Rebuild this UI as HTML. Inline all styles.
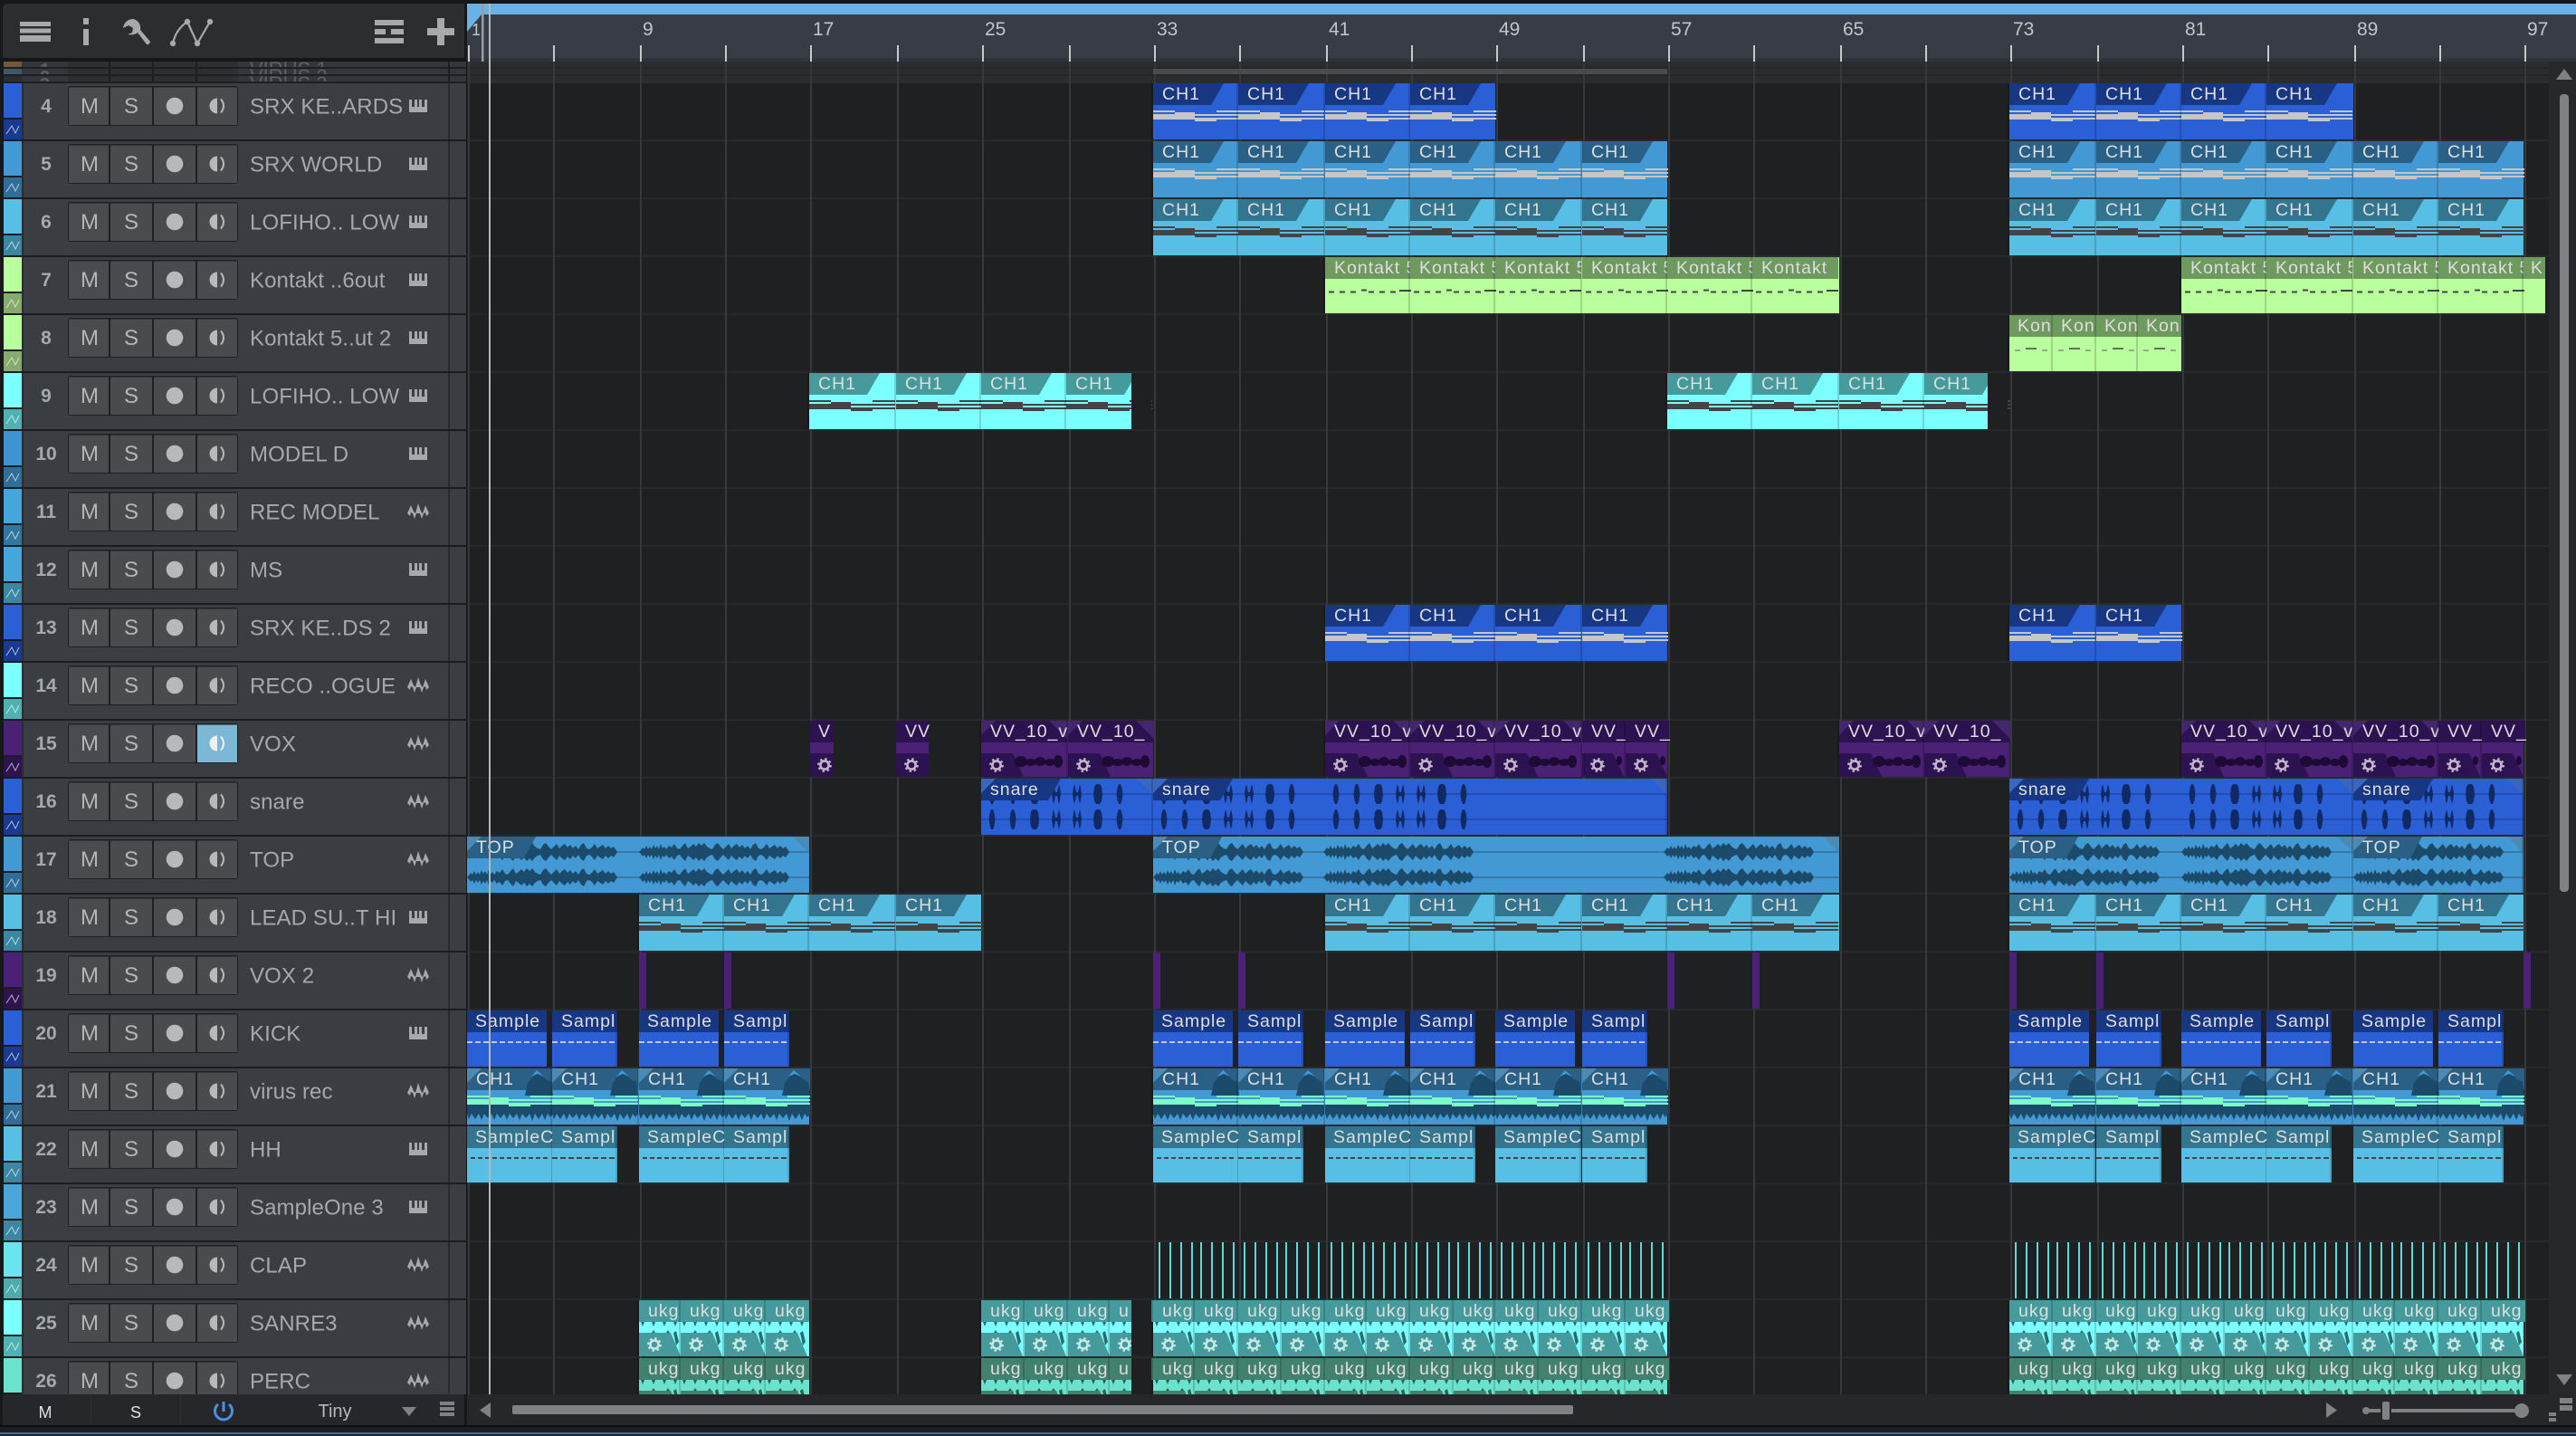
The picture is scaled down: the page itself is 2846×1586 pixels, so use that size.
<!DOCTYPE html>
<html><head><meta charset="utf-8"><style>
html,body{margin:0;padding:0;background:#1d1e20}
svg{display:block}
text{font-family:"Liberation Sans",sans-serif}
.l text{font-size:19.5px;fill:#dedede;letter-spacing:1px}
.nm{font-size:24px;fill:#a6a8aa;letter-spacing:.1px}
.no{font-size:21px;font-weight:700;fill:#a6a8aa;text-anchor:middle}
.bt{font-size:24px;fill:#b4b6b8;text-anchor:middle}
.rl text{font-size:21px;fill:#c4c4c4}
.B{fill:var(--b)}
.c4{--b:#2a5fd6;--h:#183783;--n:#c6c6c6;--l:#3b66bd;--w:#102a66}
.c5{--b:#4399d4;--h:#2a6085;--n:#c6c6c6;--l:#4a8ab5;--w:#1c4a6a}
.c6{--b:#57bfe4;--h:#33748f;--n:#444444}
.c7{--b:#baff9e;--h:#6e9a60;--n:#444444}
.c9{--b:#7cffff;--h:#459a9b;--n:#444444}
.c15{--b:#4a2175;--h:#2c1250;--g:#c2b6cc}
.c21{--b:#4399d4;--h:#2a6085;--n:#7dffc8}
.c25{--b:#7cffff;--h:#459a9b;--t:#2d6a6e;--g:#c8e8e8}
.c26{--b:#6be3cc;--h:#42806f;--t:#2d5e55;--g:#c8e8e8}
</style></head><body>
<svg xmlns="http://www.w3.org/2000/svg" width="2846" height="1586" viewBox="0 0 2846 1586">
<defs>
<pattern id="rp" patternUnits="userSpaceOnUse" x="0" y="92" width="10" height="64"><rect y="62" width="10" height="2" fill="#28292c"/></pattern>
<rect id="sp" x="-2" width="2" height="62" fill="#000" opacity=".16"/>
<path id="hd" d="M0,0H78L64,24H0z" style="fill:var(--h)"/>
<path id="nt" d="M0,30h24v2H0zM0,34h24v6H0zM24,32h22v8H24zM46,34h24v2H46zM46,38h24v4H46zM70,30h25v2H70zM70,34h25v2H70zM70,38h25v2H70z" style="fill:var(--n)"/>
<g id="c"><use href="#hd"/><use href="#nt"/><use href="#sp"/></g>
<g id="k"><rect width="95" height="24" style="fill:var(--h)"/><path d="M4,38.5H38M40,36.5H46M48,38.5H82" stroke="#444" stroke-width="2" stroke-dasharray="6 6" fill="none"/><path d="M82,37H95" stroke="#444" stroke-width="2" fill="none"/><use href="#sp"/></g>
<g id="k2"><rect width="48" height="24" style="fill:var(--h)"/><path d="M18,37H30" stroke="#444" stroke-width="1.500" fill="none"/><path d="M6,39H12M36,39H42" stroke="#666" stroke-width="1" fill="none"/><use href="#sp"/></g>
<g id="gr"><circle r="4.6" fill="none" stroke-width="2.6" style="stroke:var(--g)"/><circle r="6.8" fill="none" stroke-width="2.2" stroke-dasharray="2.4 2.94" style="stroke:var(--g)"/></g>
<g id="v"><rect width="95" height="24" style="fill:var(--h)"/><path d="M0,16L16,0H0zM75,0H95V20z" fill="#43266e"/><path d="M0,36H35L47,62H0z" style="fill:var(--h)"/><g fill="#1d0a35"><ellipse cx="44" cy="45" rx="7" ry="6"/><ellipse cx="55" cy="46" rx="6" ry="4"/><ellipse cx="65" cy="45" rx="6" ry="5"/><ellipse cx="76" cy="46" rx="6" ry="4"/><ellipse cx="85" cy="45" rx="5" ry="7"/></g><use href="#gr" x="17" y="49"/><use href="#sp"/></g>
<g id="vh"><rect width="48" height="24" style="fill:var(--h)"/><path d="M0,36H34L46,62H0z" style="fill:var(--h)"/><ellipse cx="41" cy="44" rx="3" ry="5" fill="#1d0a35"/><use href="#gr" x="17" y="49"/><use href="#sp"/></g>
<path id="bb" d="M-3.5,0L-2.500,-7-1,-11H1L2.500,-7 3.500,0 2.500,7 1,11H-1L-2.500,7z"/>
<path id="bf" d="M-5,0L-4,-8-2,-11H2L4,-8 5,0 4,8 2,11H-2L-4,8z"/>
<path id="bd" d="M-5,0L-4,-7-3,-11-2,-7-1,-2 1,-2 2,-7 3,-11 4,-7 5,0 4,7 3,11 2,7 1,2-1,2-2,7-3,11-4,7z"/>
<g id="sh"><use href="#bb" x="12"/><use href="#bb" x="35"/><use href="#bf" x="59"/><use href="#bd" x="83"/><use href="#bd" x="106"/><use href="#bf" x="129"/><use href="#bb" x="153"/></g>
<g id="sn" fill="#102a66"><use href="#sh" y="17"/><use href="#sh" y="45"/></g>
<g id="shd"><path d="M0,0H88L74,24H0z" style="fill:var(--h)"/><path d="M0,16L16,0H0z" style="fill:var(--l)"/></g>
<g id="thd"><path d="M0,0H76L63,24H0z" style="fill:var(--h)"/><path d="M0,16L16,0H0z" style="fill:var(--l)"/></g>
<path id="tr" d="M-18,0H0V18z" style="fill:var(--l)"/>
<path id="wu" d="M0,0L2,-2 4,-5 6,-3 8,-7 10,-3 12,-6 14,-3 16,-8 18,-4 20,-7 22,-3 24,-9 26,-4 28,-6 30,-3 33,-7 36,-5 39,-9 42,-4 45,-3 48,-7 51,-10 54,-4 57,-6 60,-9 63,-6 66,-10 69,-7 72,-10 75,-6 78,-4 81,-3 84,-8 87,-10 90,-6 93,-3 96,-6 99,-9 102,-4 105,-7 108,-9 111,-5 114,-8 117,-4 120,-7 123,-3 126,-8 129,-10 132,-4 135,-3 138,-5 141,-9 144,-4 147,-6 150,-8 153,-4 156,-7 159,-4 162,-6 166,0z"/>
<g id="wd"><use href="#wu"/><use href="#wu" transform="scale(1,-1)"/></g>
<g id="wt" fill="#1c4a6a"><use href="#wd" y="17"/><use href="#wd" y="45"/></g>
<g id="sa"><rect width="88" height="62" class="B"/><rect width="88" height="24" style="fill:var(--h)"/><path d="M0,35H88" stroke-width="2" stroke-dasharray="6 3" fill="none" style="stroke:var(--n)"/></g>
<g id="sb"><rect width="72" height="62" class="B"/><rect width="72" height="24" style="fill:var(--h)"/><rect x="70" width="2" height="62" fill="#000" opacity=".16"/><path d="M0,35H72" stroke-width="2" stroke-dasharray="6 3" fill="none" style="stroke:var(--n)"/></g>
<g id="sc"><rect width="95" height="62" class="B"/><rect width="95" height="24" style="fill:var(--h)"/><rect x="93" width="2" height="62" fill="#000" opacity=".16"/><path d="M4,35H92" stroke-width="2" stroke-dasharray="5 3" fill="none" style="stroke:var(--n)"/></g>
<g id="m"><rect width="95" height="24" style="fill:var(--h)"/><path d="M0,16L16,0H0z" fill="#4a8ab5"/><path d="M64,30L67,16 71,11 77,2 83,8 87,12 93,15 95,30z" fill="#1c4a6a"/><path d="M71,9L77,2 85,9 78,6z" fill="#4399d4"/><path d="M0,38H95V50L92,54 89,50 86,57 83,50 79,56 75,50 72,58 69,50 65,55 61,50 58,57 55,50 51,55 47,50 44,57 41,50 37,55 33,50 30,57 27,50 23,55 19,50 16,57 13,50 9,56 5,50 2,56 0,50z" fill="#1c4a6a"/><use href="#nt"/><use href="#sp"/></g>
<g id="u"><rect width="48" height="24" style="fill:var(--h)"/><path d="M2,24h4l-2,5zM14,24h4l-2,5zM26,24h4l-2,5zM38,24h4l-2,5zM14,36h4l-2,-3zM30,36h4l-2,-3z" style="fill:var(--t)"/><path d="M0,36H35L46,62H0z" style="fill:var(--h)"/><path d="M38,36L41,34 44,46 41,50z" style="fill:var(--t)"/><use href="#gr" x="17" y="49"/><use href="#sp"/></g>
<g id="l8" fill="#5fd9d8"><rect x="6" width="2" height="62"/><rect x="18" width="2" height="62"/><rect x="30" width="2" height="62"/><rect x="42" width="2" height="62"/><rect x="52" width="2" height="62"/><rect x="64" width="2" height="62"/><rect x="76" width="2" height="62"/><rect x="88" width="2" height="62"/></g>
<g id="row">
<rect x="4" width="20" height="38" style="fill:var(--a)"/><rect x="4" y="38" width="20" height="2" fill="#1c1d1f"/><rect x="4" y="40" width="20" height="22" style="fill:var(--d)"/>
<path d="M7,56L13,47 17,55 21,47" fill="none" stroke="#fff" stroke-opacity=".65" stroke-width="1"/>
<rect x="24" width="2" height="62" fill="#2b2d30"/><rect x="26" width="489" height="62" fill="#3a3d41"/><rect x="495" width="2" height="62" fill="#2a2c2e"/><rect x="4" y="62" width="511" height="2" fill="#1c1d1f"/>
<rect x="75" y="3" width="188" height="44" rx="3" fill="#1f2022"/>
<rect x="76" y="4.500" width="44" height="41.500" rx="1" fill="#494b4f"/><rect x="122" y="4.500" width="46" height="41.500" rx="1" fill="#494b4f"/><rect x="170" y="4.500" width="46" height="41.500" rx="1" fill="#494b4f"/><rect x="218" y="4.500" width="44" height="41.500" rx="1" fill="#494b4f"/>
<circle cx="193" cy="25" r="9.300" fill="#b8b9bb"/><path d="M240,16.500A8.500,8.500 0 0 0 240,33.500z" fill="#b8b9bb"/><path d="M244,17.500Q250,25 244,32.500" fill="none" stroke="#b8b9bb" stroke-width="2"/>
</g>
<path id="p" d="M452,18h3v8h3v-8h3v8h2v-8h3v8h3v-8h3v14h-20z" fill="#a6a8aa"/>
<path id="w" d="M450,27L454,18 457,25 459,27 462,16 465,25 467,27 470,18 474,27 471,30 470,26 468,27 466,33 464,27 460,27 458,33 456,27 454,26 453,30z" fill="#a6a8aa"/>
</defs>

<rect width="2846" height="1586" fill="#1d1e20"/>
<!-- arrange -->
<rect x="516" y="68" width="2300" height="1472" fill="#1e2022"/>
<rect x="516" y="68" width="2300" height="24" fill="#2a2c2f"/>
<rect x="516" y="74" width="2300" height="2" fill="#252629"/><rect x="516" y="82" width="2300" height="2" fill="#252629"/>
<rect x="516" y="92" width="2300" height="1448" fill="url(#rp)"/>
<g fill="#37383b"><rect x="517" y="68" width="2" height="1472"/><rect x="611" y="68" width="2" height="1472"/><rect x="707" y="68" width="2" height="1472"/><rect x="801" y="68" width="2" height="1472"/><rect x="895" y="68" width="2" height="1472"/><rect x="991" y="68" width="2" height="1472"/><rect x="1085" y="68" width="2" height="1472"/><rect x="1181" y="68" width="2" height="1472"/><rect x="1275" y="68" width="2" height="1472"/><rect x="1369" y="68" width="2" height="1472"/><rect x="1465" y="68" width="2" height="1472"/><rect x="1559" y="68" width="2" height="1472"/><rect x="1653" y="68" width="2" height="1472"/><rect x="1749" y="68" width="2" height="1472"/><rect x="1843" y="68" width="2" height="1472"/><rect x="1937" y="68" width="2" height="1472"/><rect x="2033" y="68" width="2" height="1472"/><rect x="2127" y="68" width="2" height="1472"/><rect x="2221" y="68" width="2" height="1472"/><rect x="2317" y="68" width="2" height="1472"/><rect x="2411" y="68" width="2" height="1472"/><rect x="2505" y="68" width="2" height="1472"/><rect x="2601" y="68" width="2" height="1472"/><rect x="2695" y="68" width="2" height="1472"/><rect x="2789" y="68" width="2" height="1472"/></g>
<rect x="1274" y="76" width="568" height="6" fill="#4b4b4c"/>

<!-- ruler -->
<rect x="516" y="0" width="2330" height="68" fill="#373c46"/>
<rect x="516" y="64" width="2330" height="4" fill="#2f333c"/>
<rect x="0" y="0" width="2846" height="4" fill="#141516"/>
<path d="M532,4H2846V16H532L516,35V4z" fill="#6ab2e6"/>
<g fill="#c8c8c8"><rect x="517" y="50" width="2" height="18"/><rect x="611" y="50" width="2" height="18"/><rect x="707" y="50" width="2" height="18"/><rect x="801" y="50" width="2" height="18"/><rect x="895" y="50" width="2" height="18"/><rect x="991" y="50" width="2" height="18"/><rect x="1085" y="50" width="2" height="18"/><rect x="1181" y="50" width="2" height="18"/><rect x="1275" y="50" width="2" height="18"/><rect x="1369" y="50" width="2" height="18"/><rect x="1465" y="50" width="2" height="18"/><rect x="1559" y="50" width="2" height="18"/><rect x="1653" y="50" width="2" height="18"/><rect x="1749" y="50" width="2" height="18"/><rect x="1843" y="50" width="2" height="18"/><rect x="1937" y="50" width="2" height="18"/><rect x="2033" y="50" width="2" height="18"/><rect x="2127" y="50" width="2" height="18"/><rect x="2221" y="50" width="2" height="18"/><rect x="2317" y="50" width="2" height="18"/><rect x="2411" y="50" width="2" height="18"/><rect x="2505" y="50" width="2" height="18"/><rect x="2601" y="50" width="2" height="18"/><rect x="2695" y="50" width="2" height="18"/><rect x="2789" y="50" width="2" height="18"/></g>
<rect x="532" y="4" width="2.500" height="64" fill="#9a9c9e"/>
<g class="rl"><text x="521" y="39" style="font-size:18px">1</text><text x="710" y="39">9</text><text x="898" y="39">17</text><text x="1088" y="39">25</text><text x="1278" y="39">33</text><text x="1468" y="39">41</text><text x="1656" y="39">49</text><text x="1846" y="39">57</text><text x="2036" y="39">65</text><text x="2224" y="39">73</text><text x="2414" y="39">81</text><text x="2604" y="39">89</text><text x="2792" y="39">97</text></g>

<!-- row 4 -->
<g class="c4" transform="translate(0,92)"><rect x="1274" width="378" height="62" class="B"/><use href="#c" x="1274"/><use href="#c" x="1368"/><use href="#c" x="1464"/><use href="#c" x="1558"/><rect x="2220" width="380" height="62" class="B"/><use href="#c" x="2220"/><use href="#c" x="2316"/><use href="#c" x="2410"/><use href="#c" x="2504"/></g>
<g class="l" transform="translate(0,110)"><text x="1284">CH1</text><text x="1378">CH1</text><text x="1474">CH1</text><text x="1568">CH1</text><text x="2230">CH1</text><text x="2326">CH1</text><text x="2420">CH1</text><text x="2514">CH1</text></g>
<!-- row 5 -->
<g class="c5" transform="translate(0,156)"><rect x="1274" width="568" height="62" class="B"/><use href="#c" x="1274"/><use href="#c" x="1368"/><use href="#c" x="1464"/><use href="#c" x="1558"/><use href="#c" x="1652"/><use href="#c" x="1748"/><rect x="2220" width="568" height="62" class="B"/><use href="#c" x="2220"/><use href="#c" x="2316"/><use href="#c" x="2410"/><use href="#c" x="2504"/><use href="#c" x="2600"/><use href="#c" x="2694"/></g>
<g class="l" transform="translate(0,174)"><text x="1284">CH1</text><text x="1378">CH1</text><text x="1474">CH1</text><text x="1568">CH1</text><text x="1662">CH1</text><text x="1758">CH1</text><text x="2230">CH1</text><text x="2326">CH1</text><text x="2420">CH1</text><text x="2514">CH1</text><text x="2610">CH1</text><text x="2704">CH1</text></g>
<!-- row 6 -->
<g class="c6" transform="translate(0,220)"><rect x="1274" width="568" height="62" class="B"/><use href="#c" x="1274"/><use href="#c" x="1368"/><use href="#c" x="1464"/><use href="#c" x="1558"/><use href="#c" x="1652"/><use href="#c" x="1748"/><rect x="2220" width="568" height="62" class="B"/><use href="#c" x="2220"/><use href="#c" x="2316"/><use href="#c" x="2410"/><use href="#c" x="2504"/><use href="#c" x="2600"/><use href="#c" x="2694"/></g>
<g class="l" transform="translate(0,238)"><text x="1284">CH1</text><text x="1378">CH1</text><text x="1474">CH1</text><text x="1568">CH1</text><text x="1662">CH1</text><text x="1758">CH1</text><text x="2230">CH1</text><text x="2326">CH1</text><text x="2420">CH1</text><text x="2514">CH1</text><text x="2610">CH1</text><text x="2704">CH1</text></g>
<!-- row 7 -->
<g class="c7 l" transform="translate(0,284)"><rect x="1464" width="568" height="62" class="B"/><use href="#k" x="1464"/><text x="1474" y="18">Kontakt 5</text><use href="#k" x="1558"/><text x="1568" y="18">Kontakt 5</text><use href="#k" x="1652"/><text x="1662" y="18">Kontakt 5</text><use href="#k" x="1748"/><text x="1758" y="18">Kontakt 5</text><use href="#k" x="1842"/><text x="1852" y="18">Kontakt 5</text><use href="#k" x="1936"/><text x="1946" y="18">Kontakt</text><rect x="2410" width="402" height="62" class="B"/><use href="#k" x="2410"/><text x="2420" y="18">Kontakt 5</text><use href="#k" x="2504"/><text x="2514" y="18">Kontakt 5</text><use href="#k" x="2600"/><text x="2610" y="18">Kontakt 5</text><use href="#k" x="2694"/><text x="2704" y="18">Kontakt 5</text><rect x="2788" width="24" height="24" style="fill:var(--h)"/><use href="#sp" x="2788"/><text x="2796" y="18">K</text></g>
<!-- row 8 -->
<g class="c7" transform="translate(0,348)"><rect x="2220" width="190" height="62" class="B"/><use href="#k2" x="2220"/><use href="#k2" x="2268"/><use href="#k2" x="2316"/><use href="#k2" x="2362"/></g>
<g class="l" transform="translate(0,366)"><text x="2229">Kon</text><text x="2277">Kon</text><text x="2325">Kon</text><text x="2371">Kon</text></g>
<!-- row 9 -->
<g class="c9" transform="translate(0,412)"><rect x="894" width="356" height="62" class="B"/><use href="#c" x="894"/><use href="#c" x="990"/><use href="#c" x="1084"/><use href="#c" x="1178"/><rect x="1250" width="22" height="62" fill="#1e2022"/><rect x="1842" width="354" height="62" class="B"/><use href="#c" x="1842"/><use href="#c" x="1936"/><use href="#c" x="2032"/><use href="#c" x="2126"/><rect x="2196" width="22" height="62" fill="#1e2022"/></g>
<g class="l" transform="translate(0,430)"><text x="904">CH1</text><text x="1000">CH1</text><text x="1094">CH1</text><text x="1188">CH1</text><text x="1852">CH1</text><text x="1946">CH1</text><text x="2042">CH1</text><text x="2136">CH1</text></g>
<!-- row 13 -->
<g class="c4" transform="translate(0,668)"><rect x="1464" width="378" height="62" class="B"/><use href="#c" x="1464"/><use href="#c" x="1558"/><use href="#c" x="1652"/><use href="#c" x="1748"/><rect x="2220" width="190" height="62" class="B"/><use href="#c" x="2220"/><use href="#c" x="2316"/></g>
<g class="l" transform="translate(0,686)"><text x="1474">CH1</text><text x="1568">CH1</text><text x="1662">CH1</text><text x="1758">CH1</text><text x="2230">CH1</text><text x="2326">CH1</text></g>
<!-- row 15 -->
<g class="c15 l" transform="translate(0,796)">
<rect x="895" width="26" height="62" style="fill:var(--h)"/><rect x="895" y="24" width="26" height="12" class="B"/><use href="#gr" x="911" y="49"/><text x="904" y="18">V</text>
<rect x="990" width="36" height="62" style="fill:var(--h)"/><rect x="990" y="24" width="36" height="12" class="B"/><use href="#gr" x="1007" y="49"/><text x="1000" y="18">VV</text>
<rect x="1084" width="190" height="62" class="B"/><use href="#v" x="1084"/><text x="1094" y="18">VV_10_v</text><use href="#v" x="1180"/><text x="1190" y="18">VV_10_</text>
<rect x="1464" width="378" height="62" class="B"/><use href="#v" x="1464"/><text x="1474" y="18">VV_10_v</text><use href="#v" x="1558"/><text x="1568" y="18">VV_10_v</text><use href="#v" x="1652"/><text x="1662" y="18">VV_10_v</text><use href="#vh" x="1748"/><text x="1758" y="18">VV_</text><use href="#vh" x="1796"/><text x="1806" y="18">VV_</text>
<rect x="2032" width="188" height="62" class="B"/><use href="#v" x="2032"/><text x="2042" y="18">VV_10_v</text><use href="#v" x="2126"/><text x="2136" y="18">VV_10_</text>
<rect x="2410" width="378" height="62" class="B"/><use href="#v" x="2410"/><text x="2420" y="18">VV_10_v</text><use href="#v" x="2504"/><text x="2514" y="18">VV_10_v</text><use href="#v" x="2600"/><text x="2610" y="18">VV_10_v</text><use href="#vh" x="2694"/><text x="2704" y="18">VV_</text><use href="#vh" x="2742"/><text x="2752" y="18">VV_</text>
</g>
<!-- row 16 -->
<g class="c4" transform="translate(0,860)">
<rect x="1084" width="758" height="62" class="B"/><rect x="2220" width="568" height="62" class="B"/>
<path d="M1084,16h758v2H1084zM1084,44h758v2H1084zM2220,16h568v2H2220zM2220,44h568v2H2220z" fill="#183783" opacity=".4"/>
<use href="#sn" x="1084"/><use href="#sn" x="1274"/><use href="#sn" x="1464"/><use href="#sn" x="2220"/><use href="#sn" x="2410"/><use href="#sn" x="2600"/>
<use href="#tr" x="1274"/><use href="#tr" x="1842"/><use href="#tr" x="2600"/><use href="#tr" x="2788"/><use href="#sp" x="1274"/><use href="#sp" x="2600"/><use href="#sp" x="1842"/><use href="#sp" x="2788"/>
<use href="#shd" x="1084"/><use href="#shd" x="1274"/><use href="#shd" x="2220"/><use href="#shd" x="2600"/>
</g>
<g class="l" transform="translate(0,878)"><text x="1094">snare</text><text x="1284">snare</text><text x="2230">snare</text><text x="2610">snare</text></g>
<!-- row 17 -->
<g class="c5" transform="translate(0,924)">
<rect x="516" width="378" height="62" class="B"/><rect x="1274" width="758" height="62" class="B"/><rect x="2220" width="568" height="62" class="B"/>
<path d="M516,16h378v2H516zM516,44h378v2H516zM1274,16h758v2H1274zM1274,44h758v2H1274zM2220,16h568v2H2220zM2220,44h568v2H2220z" fill="#2a6085" opacity=".55"/>
<use href="#wt" x="516"/><use href="#wt" x="706"/><use href="#wt" x="1274"/><use href="#wt" x="1462"/><use href="#wt" x="1838"/><use href="#wt" x="2220"/><use href="#wt" x="2410"/><use href="#wt" x="2600"/>
<use href="#tr" x="894"/><use href="#tr" x="2032"/><use href="#tr" x="2600"/><use href="#tr" x="2788"/><use href="#sp" x="2600"/><use href="#sp" x="2788"/>
<use href="#thd" x="516"/><use href="#thd" x="1274"/><use href="#thd" x="2220"/><use href="#thd" x="2600"/>
</g>
<g class="l" transform="translate(0,942)"><text x="526">TOP</text><text x="1284">TOP</text><text x="2230">TOP</text><text x="2610">TOP</text></g>
<!-- row 18 -->
<g class="c6" transform="translate(0,988)"><rect x="706" width="378" height="62" class="B"/><use href="#c" x="706"/><use href="#c" x="800"/><use href="#c" x="894"/><use href="#c" x="990"/><rect x="1464" width="568" height="62" class="B"/><use href="#c" x="1464"/><use href="#c" x="1558"/><use href="#c" x="1652"/><use href="#c" x="1748"/><use href="#c" x="1842"/><use href="#c" x="1936"/><rect x="2220" width="568" height="62" class="B"/><use href="#c" x="2220"/><use href="#c" x="2316"/><use href="#c" x="2410"/><use href="#c" x="2504"/><use href="#c" x="2600"/><use href="#c" x="2694"/></g>
<g class="l" transform="translate(0,1006)"><text x="716">CH1</text><text x="810">CH1</text><text x="904">CH1</text><text x="1000">CH1</text><text x="1474">CH1</text><text x="1568">CH1</text><text x="1662">CH1</text><text x="1758">CH1</text><text x="1852">CH1</text><text x="1946">CH1</text><text x="2230">CH1</text><text x="2326">CH1</text><text x="2420">CH1</text><text x="2514">CH1</text><text x="2610">CH1</text><text x="2704">CH1</text></g>
<!-- row 19 -->
<g fill="#4a2175" transform="translate(0,1052)"><rect x="706" width="8" height="62"/><rect x="800" width="8" height="62"/><rect x="1274" width="8" height="62"/><rect x="1368" width="8" height="62"/><rect x="1842" width="8" height="62"/><rect x="1936" width="8" height="62"/><rect x="2220" width="8" height="62"/><rect x="2316" width="8" height="62"/><rect x="2788" width="8" height="62"/></g>
<!-- row 20 -->
<g class="c4" transform="translate(0,1116)"><use href="#sa" x="516"/><use href="#sb" x="610"/><use href="#sa" x="706"/><use href="#sb" x="800"/><use href="#sa" x="1274"/><use href="#sb" x="1368"/><use href="#sa" x="1464"/><use href="#sb" x="1558"/><use href="#sa" x="1652"/><use href="#sb" x="1748"/><use href="#sa" x="2220"/><use href="#sb" x="2316"/><use href="#sa" x="2410"/><use href="#sb" x="2504"/><use href="#sa" x="2600"/><use href="#sb" x="2694"/></g>
<g class="l" transform="translate(0,1134)"><text x="525">Sample</text><text x="620">Sampl</text><text x="715">Sample</text><text x="810">Sampl</text><text x="1283">Sample</text><text x="1378">Sampl</text><text x="1473">Sample</text><text x="1568">Sampl</text><text x="1661">Sample</text><text x="1758">Sampl</text><text x="2229">Sample</text><text x="2326">Sampl</text><text x="2419">Sample</text><text x="2514">Sampl</text><text x="2609">Sample</text><text x="2704">Sampl</text></g>
<!-- row 21 -->
<g class="c21" transform="translate(0,1180)"><rect x="516" width="378" height="62" class="B"/><use href="#m" x="516"/><use href="#m" x="610"/><use href="#m" x="706"/><use href="#m" x="800"/><rect x="1274" width="568" height="62" class="B"/><use href="#m" x="1274"/><use href="#m" x="1368"/><use href="#m" x="1464"/><use href="#m" x="1558"/><use href="#m" x="1652"/><use href="#m" x="1748"/><rect x="2220" width="568" height="62" class="B"/><use href="#m" x="2220"/><use href="#m" x="2316"/><use href="#m" x="2410"/><use href="#m" x="2504"/><use href="#m" x="2600"/><use href="#m" x="2694"/></g>
<g class="l" transform="translate(0,1198)"><text x="526">CH1</text><text x="620">CH1</text><text x="716">CH1</text><text x="810">CH1</text><text x="1284">CH1</text><text x="1378">CH1</text><text x="1474">CH1</text><text x="1568">CH1</text><text x="1662">CH1</text><text x="1758">CH1</text><text x="2230">CH1</text><text x="2326">CH1</text><text x="2420">CH1</text><text x="2514">CH1</text><text x="2610">CH1</text><text x="2704">CH1</text></g>
<!-- row 22 -->
<g class="c6" transform="translate(0,1244)"><use href="#sc" x="516"/><use href="#sb" x="610"/><use href="#sc" x="706"/><use href="#sb" x="800"/><use href="#sc" x="1274"/><use href="#sb" x="1368"/><use href="#sc" x="1464"/><use href="#sb" x="1558"/><use href="#sc" x="1652"/><use href="#sb" x="1748"/><use href="#sc" x="2220"/><use href="#sb" x="2316"/><use href="#sc" x="2410"/><use href="#sb" x="2504"/><use href="#sc" x="2600"/><use href="#sb" x="2694"/></g>
<g class="l" transform="translate(0,1262)"><text x="525">SampleC</text><text x="620">Sampl</text><text x="715">SampleC</text><text x="810">Sampl</text><text x="1283">SampleC</text><text x="1378">Sampl</text><text x="1473">SampleC</text><text x="1568">Sampl</text><text x="1661">SampleC</text><text x="1758">Sampl</text><text x="2229">SampleC</text><text x="2326">Sampl</text><text x="2419">SampleC</text><text x="2514">Sampl</text><text x="2609">SampleC</text><text x="2704">Sampl</text></g>
<!-- row 24 -->
<g transform="translate(0,1372)"><use href="#l8" x="1274"/><use href="#l8" x="1368"/><use href="#l8" x="1464"/><use href="#l8" x="1558"/><use href="#l8" x="1652"/><use href="#l8" x="1748"/><use href="#l8" x="2220"/><use href="#l8" x="2316"/><use href="#l8" x="2410"/><use href="#l8" x="2504"/><use href="#l8" x="2600"/><use href="#l8" x="2694"/></g>
<!-- row 25 -->
<g class="c25" transform="translate(0,1436)"><rect x="706" width="188" height="62" class="B"/><use href="#u" x="706"/><use href="#u" x="752"/><use href="#u" x="800"/><use href="#u" x="846"/><rect x="1084" width="166" height="62" class="B"/><use href="#u" x="1084"/><use href="#u" x="1132"/><use href="#u" x="1180"/><use href="#u" x="1226"/><rect x="1250" width="22" height="62" fill="#1e2022"/><rect x="1274" width="568" height="62" class="B"/><use href="#u" x="1274"/><use href="#u" x="1320"/><use href="#u" x="1368"/><use href="#u" x="1416"/><use href="#u" x="1464"/><use href="#u" x="1510"/><use href="#u" x="1558"/><use href="#u" x="1606"/><use href="#u" x="1652"/><use href="#u" x="1700"/><use href="#u" x="1748"/><use href="#u" x="1796"/><rect x="2220" width="568" height="62" class="B"/><use href="#u" x="2220"/><use href="#u" x="2268"/><use href="#u" x="2316"/><use href="#u" x="2362"/><use href="#u" x="2410"/><use href="#u" x="2458"/><use href="#u" x="2504"/><use href="#u" x="2552"/><use href="#u" x="2600"/><use href="#u" x="2646"/><use href="#u" x="2694"/><use href="#u" x="2742"/></g>
<g class="l" transform="translate(0,1454)"><text x="716">ukg</text><text x="762">ukg</text><text x="810">ukg</text><text x="856">ukg</text><text x="1094">ukg</text><text x="1142">ukg</text><text x="1190">ukg</text><text x="1236">u</text><text x="1284">ukg</text><text x="1330">ukg</text><text x="1378">ukg</text><text x="1426">ukg</text><text x="1474">ukg</text><text x="1520">ukg</text><text x="1568">ukg</text><text x="1616">ukg</text><text x="1662">ukg</text><text x="1710">ukg</text><text x="1758">ukg</text><text x="1806">ukg</text><text x="2230">ukg</text><text x="2278">ukg</text><text x="2326">ukg</text><text x="2372">ukg</text><text x="2420">ukg</text><text x="2468">ukg</text><text x="2514">ukg</text><text x="2562">ukg</text><text x="2610">ukg</text><text x="2656">ukg</text><text x="2704">ukg</text><text x="2752">ukg</text></g>
<!-- row 26 -->
<g class="c26" transform="translate(0,1500)"><rect x="706" width="188" height="62" class="B"/><use href="#u" x="706"/><use href="#u" x="752"/><use href="#u" x="800"/><use href="#u" x="846"/><rect x="1084" width="166" height="62" class="B"/><use href="#u" x="1084"/><use href="#u" x="1132"/><use href="#u" x="1180"/><use href="#u" x="1226"/><rect x="1250" width="22" height="62" fill="#1e2022"/><rect x="1274" width="568" height="62" class="B"/><use href="#u" x="1274"/><use href="#u" x="1320"/><use href="#u" x="1368"/><use href="#u" x="1416"/><use href="#u" x="1464"/><use href="#u" x="1510"/><use href="#u" x="1558"/><use href="#u" x="1606"/><use href="#u" x="1652"/><use href="#u" x="1700"/><use href="#u" x="1748"/><use href="#u" x="1796"/><rect x="2220" width="568" height="62" class="B"/><use href="#u" x="2220"/><use href="#u" x="2268"/><use href="#u" x="2316"/><use href="#u" x="2362"/><use href="#u" x="2410"/><use href="#u" x="2458"/><use href="#u" x="2504"/><use href="#u" x="2552"/><use href="#u" x="2600"/><use href="#u" x="2646"/><use href="#u" x="2694"/><use href="#u" x="2742"/></g>
<g class="l" transform="translate(0,1518)"><text x="716">ukg</text><text x="762">ukg</text><text x="810">ukg</text><text x="856">ukg</text><text x="1094">ukg</text><text x="1142">ukg</text><text x="1190">ukg</text><text x="1236">u</text><text x="1284">ukg</text><text x="1330">ukg</text><text x="1378">ukg</text><text x="1426">ukg</text><text x="1474">ukg</text><text x="1520">ukg</text><text x="1568">ukg</text><text x="1616">ukg</text><text x="1662">ukg</text><text x="1710">ukg</text><text x="1758">ukg</text><text x="1806">ukg</text><text x="2230">ukg</text><text x="2278">ukg</text><text x="2326">ukg</text><text x="2372">ukg</text><text x="2420">ukg</text><text x="2468">ukg</text><text x="2514">ukg</text><text x="2562">ukg</text><text x="2610">ukg</text><text x="2656">ukg</text><text x="2704">ukg</text><text x="2752">ukg</text></g>

<!-- right column -->
<rect x="2816" y="68" width="30" height="1472" fill="#27282b"/>
<path d="M2833,76L2842,88H2824z" fill="#808183"/>
<rect x="2828" y="104" width="10" height="881" rx="4" fill="#808183"/>
<path d="M2824,1518H2842L2833,1530z" fill="#808183"/>

<!-- left panel -->
<rect x="0" y="0" width="516" height="1586" fill="#17181a"/>
<path d="M3,68V10Q3,4 9,4H513V64H3z" fill="#2b2d31"/>
<rect x="3" y="64" width="513" height="4" fill="#151617"/>
<rect x="513" y="4" width="3" height="1570" fill="#17181a"/>
<g fill="#a8a9ab">
<rect x="22" y="24" width="34" height="5"/><rect x="22" y="31.500" width="34" height="5"/><rect x="22" y="39" width="34" height="5"/><rect x="22" y="43" width="34" height="3"/>
<rect x="92" y="20" width="6" height="7"/><rect x="92" y="32" width="6" height="18"/>
<path d="M147,21C141,21 137,25 136,31L142,28 147,31 146,36 141,38C146,39 150,38 152,36L162,49C163,50 166,48 166,46L155,33C156,28 153,22 147,21z"/>
<circle cx="191" cy="48" r="3.200"/><circle cx="207" cy="24" r="3.200"/><circle cx="218" cy="48" r="3.200"/><circle cx="232" cy="24" r="3.200"/>
<path d="M191,48C193,38 198,30 207,24M207,24L218,48M218,48L232,24" fill="none" stroke="#a8a9ab" stroke-width="2.200"/>
<path d="M414,22h32v6h-32zM414,32h12v6h-12zM432,32h14v6h-14zM414,42h32v6h-32z"/>
<rect x="472" y="31" width="30" height="8"/><rect x="483" y="20" width="8" height="30"/>
</g>
<rect x="4" y="68" width="511" height="24" fill="#33363a"/>
<rect x="4" y="68" width="20" height="8" fill="#75553c"/><rect x="4" y="76" width="20" height="8" fill="#3e5a68"/><rect x="4" y="84" width="20" height="8" fill="#2b2d30"/>
<rect x="75" y="68" width="188" height="24" fill="#2d2f33"/>
<g fill="#1e1f21"><rect x="120" y="68" width="2" height="24"/><rect x="168" y="68" width="2" height="24"/><rect x="216" y="68" width="2" height="24"/><rect x="495" y="68" width="2" height="24"/><rect x="4" y="74" width="511" height="2"/><rect x="4" y="82" width="511" height="2"/><rect x="4" y="90" width="511" height="2"/></g>
<svg x="0" y="68" width="515" height="6"><text x="276" y="16" style="font-size:22px" fill="#5d5f63">VIRUS 1</text><text x="44" y="16" style="font-size:20px;font-weight:700" fill="#5d5f63">1</text></svg>
<svg x="0" y="76" width="515" height="6"><text x="276" y="16" style="font-size:22px" fill="#5d5f63">VIRUS 2</text><text x="44" y="16" style="font-size:20px;font-weight:700" fill="#5d5f63">2</text></svg>
<svg x="0" y="84" width="515" height="6"><text x="276" y="16" style="font-size:22px" fill="#5d5f63">VIRUS 3</text><text x="44" y="16" style="font-size:20px;font-weight:700" fill="#5d5f63">3</text></svg>

<g transform="translate(0,92)" style="--a:#2a5fd6;--d:#193a92"><use href="#row"/><text class="no" x="51" y="32">4</text><text class="bt" x="99" y="33">M</text><text class="bt" x="145" y="33">S</text><text class="nm" x="276" y="33.500">SRX KE..ARDS</text><use href="#p"/></g>
<g transform="translate(0,156)" style="--a:#4399d4;--d:#2e6e99"><use href="#row"/><text class="no" x="51" y="32">5</text><text class="bt" x="99" y="33">M</text><text class="bt" x="145" y="33">S</text><text class="nm" x="276" y="33.500">SRX WORLD</text><use href="#p"/></g>
<g transform="translate(0,220)" style="--a:#57bfe4;--d:#3a86a3"><use href="#row"/><text class="no" x="51" y="32">6</text><text class="bt" x="99" y="33">M</text><text class="bt" x="145" y="33">S</text><text class="nm" x="276" y="33.500">LOFIHO.. LOW</text><use href="#p"/></g>
<g transform="translate(0,284)" style="--a:#baff9e;--d:#84ad6d"><use href="#row"/><text class="no" x="51" y="32">7</text><text class="bt" x="99" y="33">M</text><text class="bt" x="145" y="33">S</text><text class="nm" x="276" y="33.500">Kontakt ..6out</text><use href="#p"/></g>
<g transform="translate(0,348)" style="--a:#baff9e;--d:#84ad6d"><use href="#row"/><text class="no" x="51" y="32">8</text><text class="bt" x="99" y="33">M</text><text class="bt" x="145" y="33">S</text><text class="nm" x="276" y="33.500">Kontakt 5..ut 2</text><use href="#p"/></g>
<g transform="translate(0,412)" style="--a:#7cffff;--d:#4fb1b1"><use href="#row"/><text class="no" x="51" y="32">9</text><text class="bt" x="99" y="33">M</text><text class="bt" x="145" y="33">S</text><text class="nm" x="276" y="33.500">LOFIHO.. LOW</text><use href="#p"/></g>
<g transform="translate(0,476)" style="--a:#3f93d0;--d:#2e6e99"><use href="#row"/><text class="no" x="51" y="32">10</text><text class="bt" x="99" y="33">M</text><text class="bt" x="145" y="33">S</text><text class="nm" x="276" y="33.500">MODEL D</text><use href="#p"/></g>
<g transform="translate(0,540)" style="--a:#45a6dc;--d:#32789e"><use href="#row"/><text class="no" x="51" y="32">11</text><text class="bt" x="99" y="33">M</text><text class="bt" x="145" y="33">S</text><text class="nm" x="276" y="33.500">REC MODEL</text><use href="#w"/></g>
<g transform="translate(0,604)" style="--a:#45a6dc;--d:#3a86a3"><use href="#row"/><text class="no" x="51" y="32">12</text><text class="bt" x="99" y="33">M</text><text class="bt" x="145" y="33">S</text><text class="nm" x="276" y="33.500">MS</text><use href="#p"/></g>
<g transform="translate(0,668)" style="--a:#2a5fd6;--d:#193a92"><use href="#row"/><text class="no" x="51" y="32">13</text><text class="bt" x="99" y="33">M</text><text class="bt" x="145" y="33">S</text><text class="nm" x="276" y="33.500">SRX KE..DS 2</text><use href="#p"/></g>
<g transform="translate(0,732)" style="--a:#7cffff;--d:#4fb1b1"><use href="#row"/><text class="no" x="51" y="32">14</text><text class="bt" x="99" y="33">M</text><text class="bt" x="145" y="33">S</text><text class="nm" x="276" y="33.500">RECO ..OGUE</text><use href="#w"/></g>
<g transform="translate(0,796)" style="--a:#4a2175;--d:#2d1450"><use href="#row"/><rect x="218" y="4.500" width="44" height="41.500" fill="#7cb8d6"/><path d="M240,16.500A8.500,8.500 0 0 0 240,33.500z" fill="#f0f0f0"/><path d="M244,17.500Q250,25 244,32.500" fill="none" stroke="#f0f0f0" stroke-width="2"/><text class="no" x="51" y="32">15</text><text class="bt" x="99" y="33">M</text><text class="bt" x="145" y="33">S</text><text class="nm" x="276" y="33.500">VOX</text><use href="#w"/></g>
<g transform="translate(0,860)" style="--a:#2a5fd6;--d:#193a92"><use href="#row"/><text class="no" x="51" y="32">16</text><text class="bt" x="99" y="33">M</text><text class="bt" x="145" y="33">S</text><text class="nm" x="276" y="33.500">snare</text><use href="#w"/></g>
<g transform="translate(0,924)" style="--a:#4399d4;--d:#2e6e99"><use href="#row"/><text class="no" x="51" y="32">17</text><text class="bt" x="99" y="33">M</text><text class="bt" x="145" y="33">S</text><text class="nm" x="276" y="33.500">TOP</text><use href="#w"/></g>
<g transform="translate(0,988)" style="--a:#57bfe4;--d:#3a86a3"><use href="#row"/><text class="no" x="51" y="32">18</text><text class="bt" x="99" y="33">M</text><text class="bt" x="145" y="33">S</text><text class="nm" x="276" y="33.500">LEAD SU..T HI</text><use href="#p"/></g>
<g transform="translate(0,1052)" style="--a:#4a2175;--d:#2d1450"><use href="#row"/><text class="no" x="51" y="32">19</text><text class="bt" x="99" y="33">M</text><text class="bt" x="145" y="33">S</text><text class="nm" x="276" y="33.500">VOX 2</text><use href="#w"/></g>
<g transform="translate(0,1116)" style="--a:#2a5fd6;--d:#193a92"><use href="#row"/><text class="no" x="51" y="32">20</text><text class="bt" x="99" y="33">M</text><text class="bt" x="145" y="33">S</text><text class="nm" x="276" y="33.500">KICK</text><use href="#p"/></g>
<g transform="translate(0,1180)" style="--a:#4399d4;--d:#2e6e99"><use href="#row"/><text class="no" x="51" y="32">21</text><text class="bt" x="99" y="33">M</text><text class="bt" x="145" y="33">S</text><text class="nm" x="276" y="33.500">virus rec</text><use href="#w"/></g>
<g transform="translate(0,1244)" style="--a:#57bfe4;--d:#3a86a3"><use href="#row"/><text class="no" x="51" y="32">22</text><text class="bt" x="99" y="33">M</text><text class="bt" x="145" y="33">S</text><text class="nm" x="276" y="33.500">HH</text><use href="#p"/></g>
<g transform="translate(0,1308)" style="--a:#4aa6d8;--d:#3a86a3"><use href="#row"/><text class="no" x="51" y="32">23</text><text class="bt" x="99" y="33">M</text><text class="bt" x="145" y="33">S</text><text class="nm" x="276" y="33.500">SampleOne 3</text><use href="#p"/></g>
<g transform="translate(0,1372)" style="--a:#6ae5f0;--d:#4cacad"><use href="#row"/><text class="no" x="51" y="32">24</text><text class="bt" x="99" y="33">M</text><text class="bt" x="145" y="33">S</text><text class="nm" x="276" y="33.500">CLAP</text><use href="#w"/></g>
<g transform="translate(0,1436)" style="--a:#7cffff;--d:#4fb1b1"><use href="#row"/><text class="no" x="51" y="32">25</text><text class="bt" x="99" y="33">M</text><text class="bt" x="145" y="33">S</text><text class="nm" x="276" y="33.500">SANRE3</text><use href="#w"/></g>
<g transform="translate(0,1500)" style="--a:#6be3cc;--d:#4fa896"><use href="#row"/><text class="no" x="51" y="32">26</text><text class="bt" x="99" y="33">M</text><text class="bt" x="145" y="33">S</text><text class="nm" x="276" y="33.500">PERC</text><use href="#w"/></g>

<!-- playhead -->
<rect x="540" y="4" width="2" height="1536" fill="#b8b8b8"/>

<!-- bottom bar -->
<rect x="3" y="1540" width="2843" height="34" fill="#26272a"/>
<rect x="0" y="1574" width="2846" height="2" fill="#0e0f10"/>
<rect x="0" y="1576" width="2846" height="6" fill="#1d1e20"/>
<rect x="0" y="1582" width="2846" height="2" fill="#47689a"/>
<rect x="0" y="1584" width="2846" height="2" fill="#222325"/>
<rect x="513" y="1540" width="3" height="34" fill="#17181a"/>
<rect x="100" y="1540" width="1" height="34" fill="#2e2f32"/><rect x="199" y="1540" width="1" height="34" fill="#2e2f32"/>
<text x="50" y="1566" text-anchor="middle" style="font-size:18px" fill="#e0e0e0">M</text>
<text x="150" y="1566" text-anchor="middle" style="font-size:18px" fill="#e0e0e0">S</text>
<path d="M241,1551A9.500,9.500 0 1 0 253,1551" fill="none" stroke="#4a90e2" stroke-width="3"/><rect x="245.500" y="1548" width="3" height="11" fill="#4a90e2"/>
<text x="370" y="1565" text-anchor="middle" style="font-size:20px" fill="#b8b9bb">Tiny</text>
<path d="M444,1554H460L452,1564z" fill="#808183"/>
<g fill="#808183"><rect x="486" y="1548" width="16" height="4"/><rect x="486" y="1554" width="16" height="4"/><rect x="486" y="1560" width="16" height="4"/></g>
<path d="M542,1549V1566L530,1557.500z" fill="#808183"/>
<rect x="566" y="1552" width="1172" height="10" rx="2" fill="#808183"/>
<path d="M2570,1549V1566L2582,1557.500z" fill="#808183"/>
<circle cx="2614" cy="1558" r="4" fill="#808183"/><rect x="2614" y="1556" width="16" height="4" fill="#808183"/>
<rect x="2632" y="1548" width="8" height="20" rx="2" fill="#808183"/><rect x="2642" y="1556" width="144" height="4" fill="#808183"/><circle cx="2786" cy="1558" r="8" fill="#808183"/>
<g fill="#808183"><rect x="2828" y="1544" width="14" height="6"/><rect x="2828" y="1552" width="14" height="6"/><rect x="2816" y="1560" width="8" height="4"/><rect x="2816" y="1566" width="8" height="4"/></g>
</svg>
</body></html>
